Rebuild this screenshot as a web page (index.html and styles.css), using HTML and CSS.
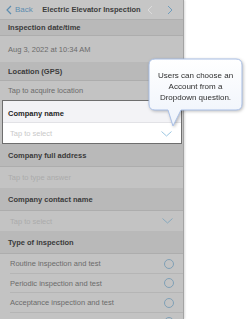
FILE: index.html
```html
<!DOCTYPE html>
<html lang="en">
<head>
    <meta charset="UTF-8">
    <meta name="viewport" content="width=device-width, initial-scale=1.0">
    <title>Electric Elevator Inspection</title>
    <link rel="stylesheet" href="styles.css">
</head>
<body>
    <div class="page">
        <div class="phone">
            <div class="navbar">
                <div class="back">
                    <svg width="6" height="10" viewBox="0 0 6 10"><path d="M5 1 L1 5 L5 9" fill="none" stroke="#5d8db0" stroke-width="1.2"/></svg>
                    <span>Back</span>
                </div>
                <div class="title">Electric Elevator Inspection</div>
                <div class="arrows">
                    <svg width="6" height="10" viewBox="0 0 6 10"><path d="M5 1 L1 5 L5 9" fill="none" stroke="#dcdcdc" stroke-width="1"/></svg>
                    <svg width="6" height="10" viewBox="0 0 6 10"><path d="M1 1 L5 5 L1 9" fill="none" stroke="#6f9dbd" stroke-width="1"/></svg>
                </div>
            </div>

            <div class="label first">Inspection date/time</div>
            <div class="answer tall">Aug 3, 2022 at 10:34 AM</div>

            <div class="label short">Location (GPS)</div>
            <div class="answer short">Tap to acquire location</div>

            <div class="focus">
                <div class="label">Company name</div>
                <div class="answer placeholder">
                    <span>Tap to select</span>
                    <svg class="chevron" width="11" height="6" viewBox="0 0 11 6"><path d="M0.5 0.5 L5.5 5 L10.5 0.5" fill="none" stroke="#9cc6e2" stroke-width="1"/></svg>
                </div>
            </div>

            <div class="label">Company full address</div>
            <div class="answer placeholder">Tap to type answer</div>

            <div class="label">Company contact name</div>
            <div class="answer placeholder indent">
                <span>Tap to select</span>
                <svg class="chevron" width="11" height="6" viewBox="0 0 11 6"><path d="M0.5 0.5 L5.5 5 L10.5 0.5" fill="none" stroke="#86a8bd" stroke-width="1"/></svg>
            </div>

            <div class="label">Type of inspection</div>
            <div class="options">
                <div class="option"><span>Routine inspection and test</span><i class="radio"></i></div>
                <div class="option"><span>Periodic inspection and test</span><i class="radio"></i></div>
                <div class="option"><span>Acceptance inspection and test</span><i class="radio"></i></div>
                <div class="option"><span></span><i class="radio"></i></div>
            </div>
        </div>

        <div class="callout">
            <svg width="96" height="72" viewBox="0 0 96 72">
                <defs>
                    <linearGradient id="bubble" x1="0" y1="0" x2="0" y2="1">
                        <stop offset="0" stop-color="#ffffff"/>
                        <stop offset="1" stop-color="#eef3fb"/>
                    </linearGradient>
                </defs>
                <path d="M7 1 H88 Q94 1 94 7 V46 Q94 52 88 52 H33 L25 68 L20 52 H7 Q1 52 1 46 V7 Q1 1 7 1 Z" fill="url(#bubble)" stroke="#a9bfe6" stroke-width="1"/>
            </svg>
            <div class="callout-text">Users can choose an<br>Account from a<br>Dropdown question.</div>
        </div>
    </div>
</body>
</html>
```

FILE: styles.css
```css
body {
    margin: 0;
    font-family: "Liberation Sans", Arial, sans-serif;
    background-color: #ffffff;
}
.page {
    position: relative;
    width: 250px;
    height: 319px;
    overflow: hidden;
}
.phone {
    width: 183px;
    height: 319px;
    background-color: #c3c3c3;
    border-right: 1px solid #a3a3a3;
    box-shadow: 1px 0 2px rgba(0,0,0,0.15);
    overflow: hidden;
}
.navbar {
    height: 20px;
    display: flex;
    align-items: center;
    padding: 0 6px;
    background-color: #c6c6c6;
    border-bottom: 1px solid #b0b0b0;
    box-sizing: border-box;
}
.back {
    display: flex;
    align-items: center;
    gap: 3px;
    color: #5d8db0;
    font-size: 8px;
    width: 34px;
    flex: none;
}
.title {
    flex: 1 1 0;
    min-width: 0;
    text-align: center;
    font-size: 7.5px;
    font-weight: bold;
    color: #3c3c3c;
    white-space: nowrap;
}
.arrows {
    flex: none;
    width: 34px;
    display: flex;
    justify-content: flex-end;
    gap: 14px;
    padding-right: 4px;
    box-sizing: border-box;
}
.label {
    height: 23px;
    display: flex;
    align-items: center;
    padding-left: 8px;
    background-color: #b9b9b9;
    font-size: 7.5px;
    font-weight: bold;
    color: #3a3a3a;
    border-bottom: 1px solid #adadad;
    box-sizing: border-box;
}
.label.first {
    height: 16px;
}
.label.short {
    height: 19px;
}
.answer {
    height: 21px;
    display: flex;
    align-items: center;
    justify-content: space-between;
    padding: 0 10px 0 8px;
    font-size: 7.5px;
    color: #6b6b6b;
    background-color: #c3c3c3;
    box-sizing: border-box;
}
.answer.tall {
    height: 26px;
}
.answer.short {
    height: 19px;
}
.answer.placeholder {
    color: #ababab;
}
.answer.indent {
    padding-left: 10px;
    height: 20px;
}
.chevron {
    display: block;
}
.focus {
    margin: 0 1px 0 2px;
    border: 1px solid #6e6e6e;
    background-color: #ffffff;
}
.focus .label {
    height: 22px;
    padding-top: 3px;
    background-color: #f3f3f6;
    color: #1f1f1f;
    padding-left: 5px;
    border-bottom: 1px solid #e2e2e6;
}
.focus .answer {
    height: 20px;
    padding-top: 1px;
    background-color: #ffffff;
    color: #c9c9c9;
    padding-right: 9px;
    padding-left: 7px;
}
.options {
    padding-left: 10px;
}
.option {
    height: 19.5px;
    display: flex;
    align-items: center;
    justify-content: space-between;
    padding-right: 9px;
    padding-top: 1px;
    font-size: 7.5px;
    color: #6b6b6b;
    border-bottom: 1px solid #b5b5b5;
    box-sizing: border-box;
}
.radio {
    width: 8px;
    height: 8px;
    border: 1px solid #80a0b6;
    border-radius: 50%;
}
.callout {
    position: absolute;
    left: 148px;
    top: 58px;
    width: 96px;
    height: 72px;
    filter: drop-shadow(1px 1px 1.5px rgba(0,0,0,0.25));
}
.callout svg {
    display: block;
}
.callout-text {
    position: absolute;
    left: 1px;
    top: 12px;
    width: 93px;
    text-align: center;
    font-size: 8px;
    line-height: 11px;
    color: #2e2e2e;
}
```
